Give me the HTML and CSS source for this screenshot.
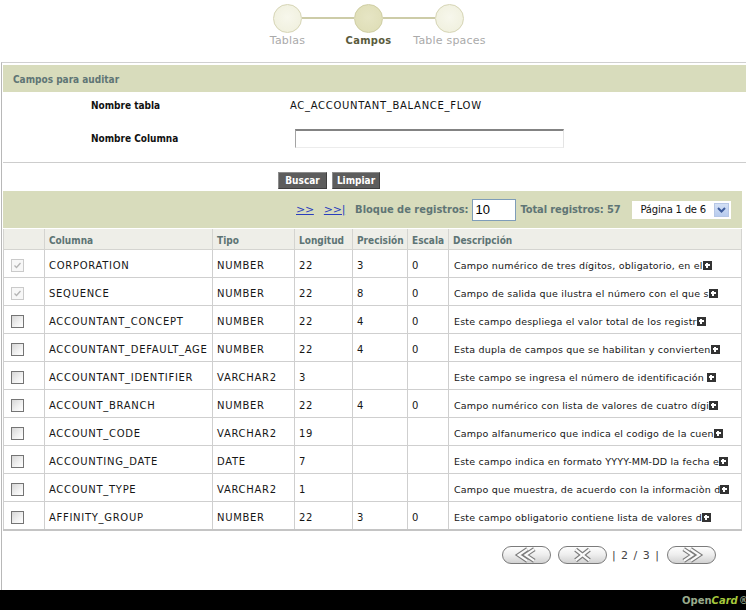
FILE: index.html
```html
<!DOCTYPE html>
<html lang="es">
<head>
<meta charset="utf-8">
<title>Campos para auditar</title>
<link rel="stylesheet" href="styles.css">
</head>
<body>
<div class="stepper">
  <div class="step"><span class="dot"></span><span class="lbl">Tablas</span></div>
  <span class="conn"></span>
  <div class="step active"><span class="dot"></span><span class="lbl">Campos</span></div>
  <span class="conn"></span>
  <div class="step"><span class="dot"></span><span class="lbl">Table spaces</span></div>
</div>

<div class="main">
  <div class="sect-head">Campos para auditar</div>

  <div class="form">
    <div class="f-label">Nombre tabla</div>
    <div class="f-value">AC_ACCOUNTANT_BALANCE_FLOW</div>
    <div class="f-label">Nombre Columna</div>
    <div class="f-value"><input class="txt" type="text"></div>
  </div>

  <div class="actions">
    <button class="btn b1">Buscar</button>
    <button class="btn b2">Limpiar</button>
  </div>

  <div class="pager">
    <a class="plink" href="#">&gt;&gt;</a>
    <a class="plink l2" href="#">&gt;&gt;|</a>
    <span class="plabel">Bloque de registros:</span>
    <input class="block" type="text" value="10">
    <span class="plabel total">Total registros: 57</span>
    <div class="sel"><span class="sel-text">Página 1 de 6</span><span class="sel-btn"><svg width="9" height="6" viewBox="0 0 9 6"><path d="M1 1 L4.5 4.5 L8 1" fill="none" stroke="#3d5c9c" stroke-width="2"/></svg></span></div>
  </div>

  <table class="grid">
    <colgroup>
      <col class="c1"><col class="c2"><col class="c3"><col class="c4"><col class="c5"><col class="c6"><col class="c7">
    </colgroup>
    <thead>
      <tr><th></th><th>Columna</th><th>Tipo</th><th>Longitud</th><th>Precisión</th><th>Escala</th><th>Descripción</th></tr>
    </thead>
    <tbody>
      <tr><td class="chk"><span class="cb on"><svg width="11" height="11" viewBox="0 0 11 11"><path d="M2.5 5.5 L4.5 7.5 L8.5 3" fill="none" stroke="#b4b4b4" stroke-width="1.3"/></svg></span></td><td>CORPORATION</td><td>NUMBER</td><td>22</td><td>3</td><td>0</td><td class="desc">Campo numérico de tres dígitos, obligatorio, en el<span class="plus"></span></td></tr>
      <tr><td class="chk"><span class="cb on"><svg width="11" height="11" viewBox="0 0 11 11"><path d="M2.5 5.5 L4.5 7.5 L8.5 3" fill="none" stroke="#b4b4b4" stroke-width="1.3"/></svg></span></td><td>SEQUENCE</td><td>NUMBER</td><td>22</td><td>8</td><td>0</td><td class="desc">Campo de salida que ilustra el número con el que s<span class="plus"></span></td></tr>
      <tr><td class="chk"><span class="cb"></span></td><td>ACCOUNTANT_CONCEPT</td><td>NUMBER</td><td>22</td><td>4</td><td>0</td><td class="desc">Este campo despliega el valor total de los registr<span class="plus"></span></td></tr>
      <tr><td class="chk"><span class="cb"></span></td><td>ACCOUNTANT_DEFAULT_AGE</td><td>NUMBER</td><td>22</td><td>4</td><td>0</td><td class="desc">Esta dupla de campos que se habilitan y convierten<span class="plus"></span></td></tr>
      <tr><td class="chk"><span class="cb"></span></td><td>ACCOUNTANT_IDENTIFIER</td><td>VARCHAR2</td><td>3</td><td></td><td></td><td class="desc">Este campo se ingresa el número de identificación <span class="plus"></span></td></tr>
      <tr><td class="chk"><span class="cb"></span></td><td>ACCOUNT_BRANCH</td><td>NUMBER</td><td>22</td><td>4</td><td>0</td><td class="desc">Campo numérico con lista de valores de cuatro dígi<span class="plus"></span></td></tr>
      <tr><td class="chk"><span class="cb"></span></td><td>ACCOUNT_CODE</td><td>VARCHAR2</td><td>19</td><td></td><td></td><td class="desc">Campo alfanumerico que indica el codigo de la cuen<span class="plus"></span></td></tr>
      <tr><td class="chk"><span class="cb"></span></td><td>ACCOUNTING_DATE</td><td>DATE</td><td>7</td><td></td><td></td><td class="desc">Este campo indica en formato YYYY-MM-DD la fecha e<span class="plus"></span></td></tr>
      <tr><td class="chk"><span class="cb"></span></td><td>ACCOUNT_TYPE</td><td>VARCHAR2</td><td>1</td><td></td><td></td><td class="desc">Campo que muestra, de acuerdo con la informaciòn d<span class="plus"></span></td></tr>
      <tr><td class="chk"><span class="cb"></span></td><td>AFFINITY_GROUP</td><td>NUMBER</td><td>22</td><td>3</td><td>0</td><td class="desc">Este campo obligatorio contiene lista de valores d<span class="plus"></span></td></tr>
    </tbody>
  </table>

  <div class="nav">
    <button class="pill" aria-label="Anterior"><svg width="48" height="16" viewBox="0 0 48 16"><g fill="none"><path d="M25 2 L16 8 L25 14 M32 2 L23 8 L32 14" stroke="#7c7c7c" stroke-width="4.4"/><path d="M25 2 L16 8 L25 14 M32 2 L23 8 L32 14" stroke="#fafafa" stroke-width="2.2"/></g></svg></button>
    <button class="pill" aria-label="Cancelar"><svg width="48" height="16" viewBox="0 0 48 16"><g fill="none"><path d="M17 2.5 L31 13.5 M31 2.5 L17 13.5" stroke="#7c7c7c" stroke-width="4.6"/><path d="M17 2.5 L31 13.5 M31 2.5 L17 13.5" stroke="#fafafa" stroke-width="2.4"/></g></svg></button>
    <span class="count">| 2 / 3 |</span>
    <button class="pill" aria-label="Siguiente"><svg width="48" height="16" viewBox="0 0 48 16"><g fill="none"><path d="M16 2 L25 8 L16 14 M23 2 L32 8 L23 14" stroke="#7c7c7c" stroke-width="4.4"/><path d="M16 2 L25 8 L16 14 M23 2 L32 8 L23 14" stroke="#fafafa" stroke-width="2.2"/></g></svg></button>
  </div>
</div>

<div class="footer"><span class="open">Open</span><span class="card">Card</span><span class="reg">®</span></div>
</body>
</html>
```

FILE: styles.css
```css
html, body {
  margin: 0;
  padding: 0;
}
body {
  width: 746px;
  height: 610px;
  overflow: hidden;
  background: #fff;
  font-family: "DejaVu Sans", Verdana, sans-serif;
  color: #111;
}

/* ---------- stepper ---------- */
.stepper {
  height: 62px;
  box-sizing: border-box;
  padding: 4px 0 0 273px;
  display: flex;
  align-items: flex-start;
}
.step {
  width: 29px;
  display: flex;
  flex-direction: column;
  align-items: center;
}
.dot {
  width: 29px;
  height: 29px;
  box-sizing: border-box;
  border-radius: 50%;
  border: 1px solid #d6d5b5;
  background: radial-gradient(circle at 50% 45%, #f7f7ec 0%, #f1f1e0 70%, #ecebd6 100%);
}
.step.active .dot {
  background: radial-gradient(circle at 50% 45%, #e6e5c4 0%, #e0dfb9 70%, #d9d8ae 100%);
  border-color: #cfcea3;
}
.lbl {
  margin-top: 1px;
  font-size: 11px;
  line-height: 13px;
  color: #aaaaaa;
  white-space: nowrap;
  letter-spacing: 0.2px;
}
.step.active .lbl {
  font-family: "DejaVu Sans Condensed", "DejaVu Sans", sans-serif;
  font-stretch: condensed;
  font-weight: bold;
  color: #5b5b3d;
  letter-spacing: 0.3px;
}
.conn {
  width: 52px;
  height: 2px;
  margin-top: 13px;
  background: #cdcca8;
}

/* ---------- main ---------- */
.main {
  height: 528px;
  box-sizing: border-box;
  margin-left: 1px;
  border-left: 1px solid #b8b8b8;
  border-top: 1px solid #d0d0d0;
  padding-left: 1px;
}
.sect-head {
  margin-top: 2px;
  height: 27px;
  box-sizing: border-box;
  padding: 2px 0 0 10px;
  background: #d8dcbc;
  display: flex;
  align-items: center;
  font-family: "DejaVu Sans Condensed", "DejaVu Sans", sans-serif;
  font-stretch: condensed;
  font-weight: bold;
  font-size: 10px;
  color: #5f7575;
}

.form {
  display: grid;
  grid-template-columns: 199px 1fr;
  row-gap: 14px;
  align-items: center;
  padding: 5px 0 14px 88px;
  border-bottom: 1px solid #cdcdcd;
}
.f-label {
  font-family: "DejaVu Sans Condensed", "DejaVu Sans", sans-serif;
  font-stretch: condensed;
  font-weight: bold;
  font-size: 10px;
  line-height: 18px;
  color: #111;
}
.f-value {
  font-size: 10px;
  letter-spacing: 0.7px;
  line-height: 18px;
  color: #111;
}
.txt {
  display: block;
  margin: 0 0 0 5px;
  width: 269px;
  height: 19px;
  box-sizing: border-box;
  padding: 0 3px;
  border-style: solid;
  border-width: 2px 1px 1px 1px;
  border-color: #838383 #e4e4e4 #ececec #a4a4a4;
  background: #fff;
  outline: none;
}

.actions {
  display: flex;
  gap: 5px;
  padding: 9px 0 2px 275px;
}
.btn {
  height: 17px;
  padding: 0;
  margin: 0;
  border: 1px solid;
  border-color: #8c8c8c #3f3f3f #3f3f3f #8c8c8c;
  background: #5d5d5d;
  color: #fff;
  font-family: "DejaVu Sans Condensed", "DejaVu Sans", sans-serif;
  font-stretch: condensed;
  font-weight: bold;
  font-size: 10px;
  line-height: 15px;
}
.b1 { width: 49px; }
.b2 { width: 48px; }

/* ---------- pager band ---------- */
.pager {
  height: 37px;
  margin-right: 4px;
  background: #d8dcbc;
  display: flex;
  align-items: center;
  padding-left: 293px;
}
.plink {
  font-size: 11px;
  color: #2b3fbc;
  text-decoration: underline;
  letter-spacing: -0.3px;
  margin-right: 10px;
}
.plabel {
  font-family: "DejaVu Sans Condensed", "DejaVu Sans", sans-serif;
  font-stretch: condensed;
  font-weight: bold;
  font-size: 11px;
  color: #5f7575;
  white-space: nowrap;
}
.block {
  margin: 0 0 0 3px;
  width: 44px;
  height: 22px;
  box-sizing: border-box;
  border: 1px solid #7f9db9;
  padding: 0 3px;
  font-family: "Liberation Sans", Arial, sans-serif;
  font-size: 13px;
  color: #000;
  background: #fff;
  outline: none;
}
.total { margin-left: 5px; letter-spacing: -0.1px; }
.sel {
  margin-left: 12px;
  width: 99px;
  height: 18px;
  box-sizing: border-box;
  background: #fff;
  display: flex;
  align-items: center;
  justify-content: space-between;
  padding: 0 2px 0 8px;
}
.sel-text {
  font-size: 10px;
  letter-spacing: -0.2px;
  color: #111;
  white-space: nowrap;
}
.sel-btn {
  width: 15px;
  height: 14px;
  box-sizing: border-box;
  background: linear-gradient(#d3e0f5, #b8ccee);
  border: 1px solid #b6c7e6;
  display: flex;
  align-items: center;
  justify-content: center;
}
.sel-btn svg { display: block; }

/* ---------- table ---------- */
.grid {
  margin-top: 1px;
  width: 738px;
  table-layout: fixed;
  border-collapse: collapse;
  border-left: 1px solid #bdbdbd;
  border-bottom: 2px solid #c4c4c4;
}
.c1 { width: 41px; }
.c2 { width: 168px; }
.c3 { width: 82px; }
.c4 { width: 58px; }
.c5 { width: 55px; }
.c6 { width: 41px; }
.c7 { width: 293px; }
.grid th {
  height: 17px;
  padding: 3px 0 0 4px;
  background: #eeeee8;
  border: 1px solid #d4d4d0;
  border-top: none;
  text-align: left;
  font-family: "DejaVu Sans Condensed", "DejaVu Sans", sans-serif;
  font-stretch: condensed;
  font-weight: bold;
  font-size: 10px;
  color: #5d7474;
  white-space: nowrap;
}
.grid td {
  height: 23px;
  padding: 4px 0 0 4px;
  border: 1px solid #cfcfcf;
  font-size: 10px;
  letter-spacing: 0.7px;
  color: #161616;
  white-space: nowrap;
  overflow: hidden;
}
.grid td.chk {
  padding: 4px 0 0 7px;
}
.cb {
  display: block;
  width: 13px;
  height: 13px;
  box-sizing: border-box;
  border: 1px solid #747474;
  background: linear-gradient(135deg, #d6d6d6 0%, #f2f2f2 60%, #ffffff 100%);
}
.cb.on {
  border-color: #cacaca;
  background: #f7f7f7;
}
.cb svg { display: block; }
.grid td.desc {
  font-size: 9.5px;
  letter-spacing: 0.2px;
  padding-left: 5px;
}
.plus {
  display: inline-block;
  width: 9px;
  height: 9px;
  vertical-align: -1px;
  background:
    linear-gradient(#fff, #fff) 2px 3px / 5px 2px no-repeat,
    linear-gradient(#fff, #fff) 3px 2px / 2px 5px no-repeat,
    #333;
}

/* ---------- bottom nav ---------- */
.nav {
  display: flex;
  justify-content: flex-end;
  align-items: center;
  padding: 15px 30px 0 0;
}
.pill {
  width: 49px;
  height: 18px;
  box-sizing: border-box;
  padding: 0;
  margin: 0;
  border: 1px solid #7b7b7b;
  border-radius: 9px;
  background: linear-gradient(#fdfdfd 0%, #efefef 45%, #d2d2d2 100%);
  display: flex;
  align-items: center;
  justify-content: center;
}
.pill svg { display: block; }
.pill + .pill { margin-left: 7px; }
.count {
  margin: 0 7px 0 5px;
  font-size: 11px;
  letter-spacing: 1px;
  color: #444;
  white-space: nowrap;
}

/* ---------- footer ---------- */
.footer {
  height: 20px;
  background: #000;
  padding-left: 682px;
  display: flex;
  align-items: center;
  white-space: nowrap;
  overflow: hidden;
  font-family: "DejaVu Sans", sans-serif;
  font-weight: bold;
  font-size: 10px;
}
.open { color: #99ab8c; }
.card { color: #a6c93c; font-style: italic; }
.reg { color: #8a9a80; margin-left: 1px; }
```
